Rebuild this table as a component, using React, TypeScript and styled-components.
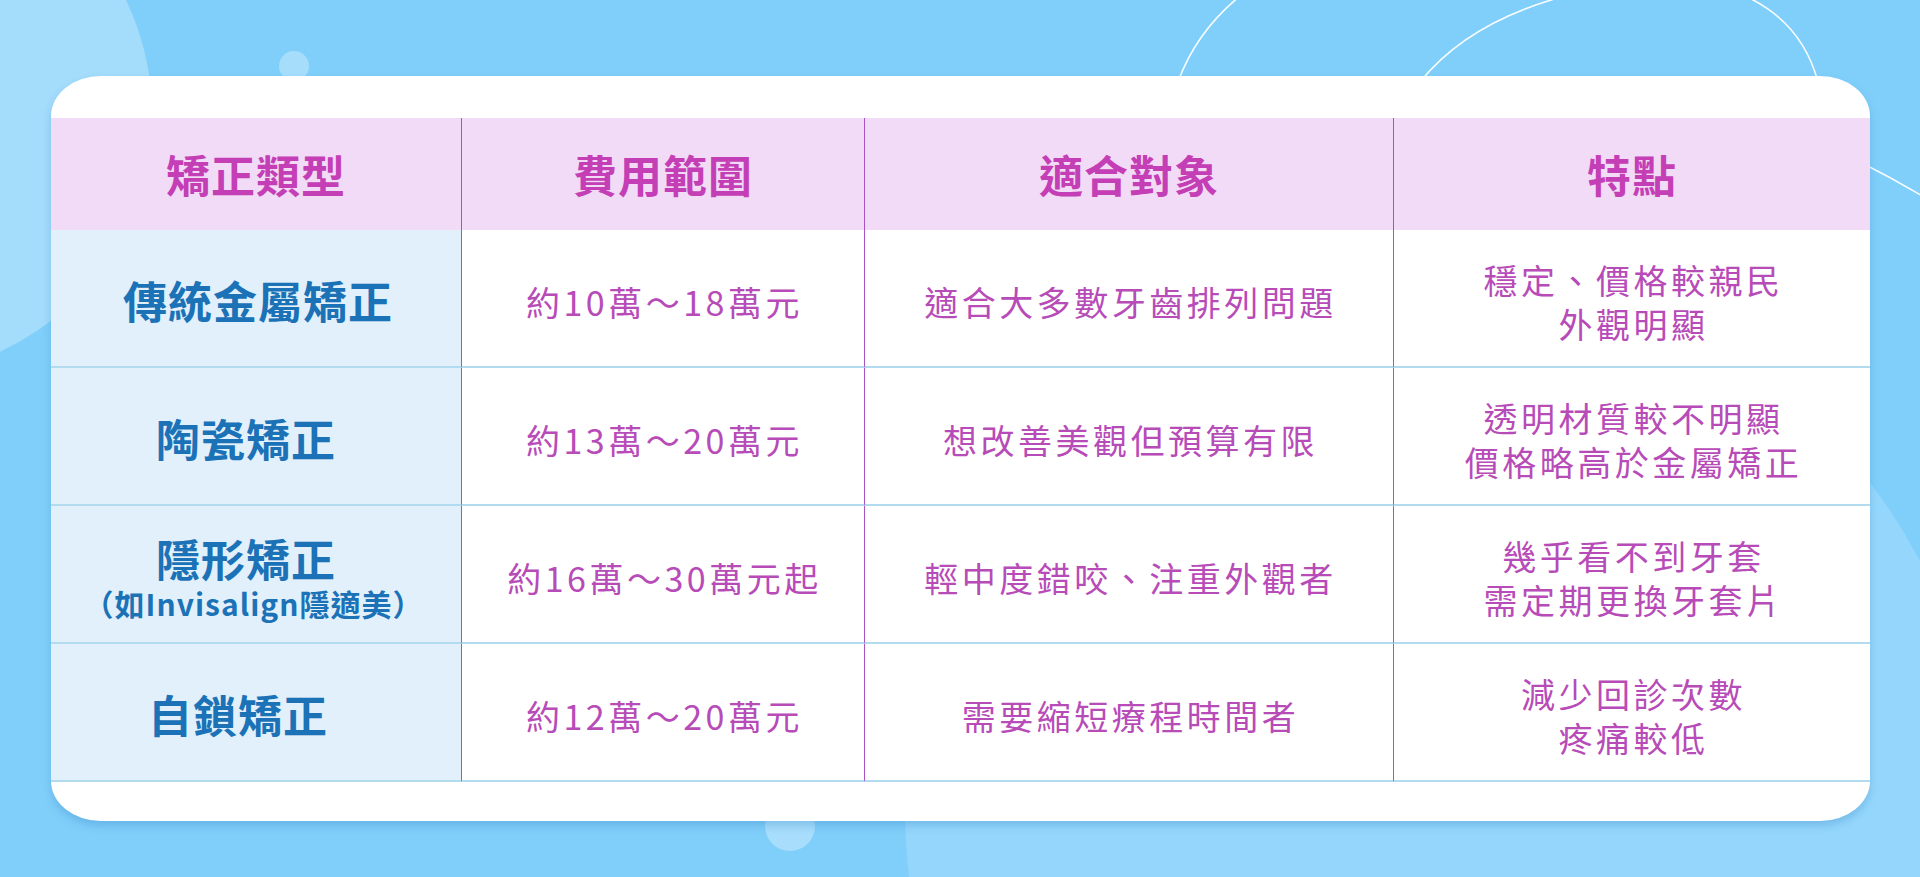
import React from "react";
import styled, { createGlobalStyle } from "styled-components";

const GlobalStyle = createGlobalStyle`
  html, body {
    margin: 0;
    padding: 0;
    background: #80cffa;
  }
  body {
    font-family: "Noto Sans CJK TC", "Noto Sans", sans-serif;
  }
`;

const Page = styled.div`
  position: relative;
  width: 1920px;
  height: 877px;
  overflow: hidden;
  background: #80cffa;
  display: flex;
  align-items: flex-start;
`;

const Backdrop = styled.svg`
  position: absolute;
  inset: 0;
  width: 1920px;
  height: 877px;
  z-index: 0;
`;

const Card = styled.div`
  position: relative;
  z-index: 1;
  margin: 76px 0 0 51px;
  width: 1819px;
  box-sizing: border-box;
  padding: 42px 0 39px;
  background: #ffffff;
  border-radius: 50px / 40px;
  box-shadow: 0 5px 9px rgba(40, 120, 190, 0.28);
`;

const Table = styled.div`
  display: grid;
  grid-template-columns: 410px 403px 529px 1fr;
`;

const HeadCell = styled.div<{ $divider?: boolean }>`
  height: 112px;
  box-sizing: border-box;
  display: flex;
  align-items: center;
  justify-content: center;
  background: #f2dbf7;
  border-left: ${(p) => (p.$divider ? "1px solid #a953c2" : "none")};
  color: #c43fb6;
  font-size: 44px;
  font-weight: 700;
  letter-spacing: 1px;
  line-height: 1;
`;

const TypeCell = styled.div`
  height: 138px;
  box-sizing: border-box;
  padding-top: 4px;
  display: flex;
  flex-direction: column;
  align-items: center;
  justify-content: center;
  background: #e1f0fa;
  border-bottom: 2px solid #b2dbf0;
  color: #1c72b7;
  text-align: center;
`;

const TypeName = styled.div<{ $shift: number }>`
  margin-right: ${(p) => -2 * p.$shift}px;
  font-size: 44px;
  font-weight: 700;
  letter-spacing: 1px;
  line-height: 54px;
  white-space: nowrap;
`;

const TypeNote = styled.div`
  margin-right: 5px;
  font-size: 30px;
  font-weight: 700;
  letter-spacing: 1px;
  line-height: 36px;
  white-space: nowrap;
`;

const DataCell = styled.div`
  height: 138px;
  box-sizing: border-box;
  display: flex;
  flex-direction: column;
  align-items: center;
  justify-content: center;
  background: #ffffff;
  border-bottom: 2px solid #b2dbf0;
  border-left: 1px solid #a953c2;
  color: #b74bb8;
  font-size: 34px;
  font-weight: 400;
  letter-spacing: 3.5px;
  line-height: 44px;
  text-align: center;
  padding: 7px 0 0 3px;
`;

const Line = styled.span`
  display: block;
  white-space: nowrap;
`;

type Row = {
  type: string;
  shift: number;
  note?: string;
  price: string;
  target: string;
  features: string[];
};

const rows: Row[] = [
  {
    type: "傳統金屬矯正",
    shift: 2,
    price: "約10萬～18萬元",
    target: "適合大多數牙齒排列問題",
    features: ["穩定、價格較親民", "外觀明顯"],
  },
  {
    type: "陶瓷矯正",
    shift: -10,
    price: "約13萬～20萬元",
    target: "想改善美觀但預算有限",
    features: ["透明材質較不明顯", "價格略高於金屬矯正"],
  },
  {
    type: "隱形矯正",
    shift: -10,
    note: "（如Invisalign隱適美）",
    price: "約16萬～30萬元起",
    target: "輕中度錯咬、注重外觀者",
    features: ["幾乎看不到牙套", "需定期更換牙套片"],
  },
  {
    type: "自鎖矯正",
    shift: -18,
    price: "約12萬～20萬元",
    target: "需要縮短療程時間者",
    features: ["減少回診次數", "疼痛較低"],
  },
];

const headers = ["矯正類型", "費用範圍", "適合對象", "特點"];

function Decorations() {
  return (
    <Backdrop viewBox="0 0 1920 877" aria-hidden="true">
      <circle cx="-110" cy="114" r="262" fill="#a4dcfb" />
      <circle cx="294" cy="66" r="15" fill="#a6ddfb" />
      <circle cx="1443" cy="810" r="538" fill="#95d7fc" />
      <circle cx="790" cy="826" r="25" fill="#a8defc" />
      <g fill="none" stroke="#ffffff" strokeWidth="1.6" strokeLinecap="round" opacity="0.95">
        <path d="M1178 82 Q1196 32 1240 -4" />
        <path d="M1420 82 Q1468 22 1565 -4" />
        <path d="M1745 -4 Q1802 22 1818 82" />
        <path d="M1860 162 Q1892 178 1924 197" />
      </g>
    </Backdrop>
  );
}

export default function App() {
  return (
    <>
      <GlobalStyle />
      <Page>
        <Decorations />
        <Card>
          <Table>
            {headers.map((h, i) => (
              <HeadCell key={h} $divider={i > 0}>
                {h}
              </HeadCell>
            ))}
            {rows.map((r) => (
              <React.Fragment key={r.type}>
                <TypeCell>
                  <TypeName $shift={r.shift}>{r.type}</TypeName>
                  {r.note && <TypeNote>{r.note}</TypeNote>}
                </TypeCell>
                <DataCell>
                  <Line>{r.price}</Line>
                </DataCell>
                <DataCell>
                  <Line>{r.target}</Line>
                </DataCell>
                <DataCell>
                  {r.features.map((f) => (
                    <Line key={f}>{f}</Line>
                  ))}
                </DataCell>
              </React.Fragment>
            ))}
          </Table>
        </Card>
      </Page>
    </>
  );
}
